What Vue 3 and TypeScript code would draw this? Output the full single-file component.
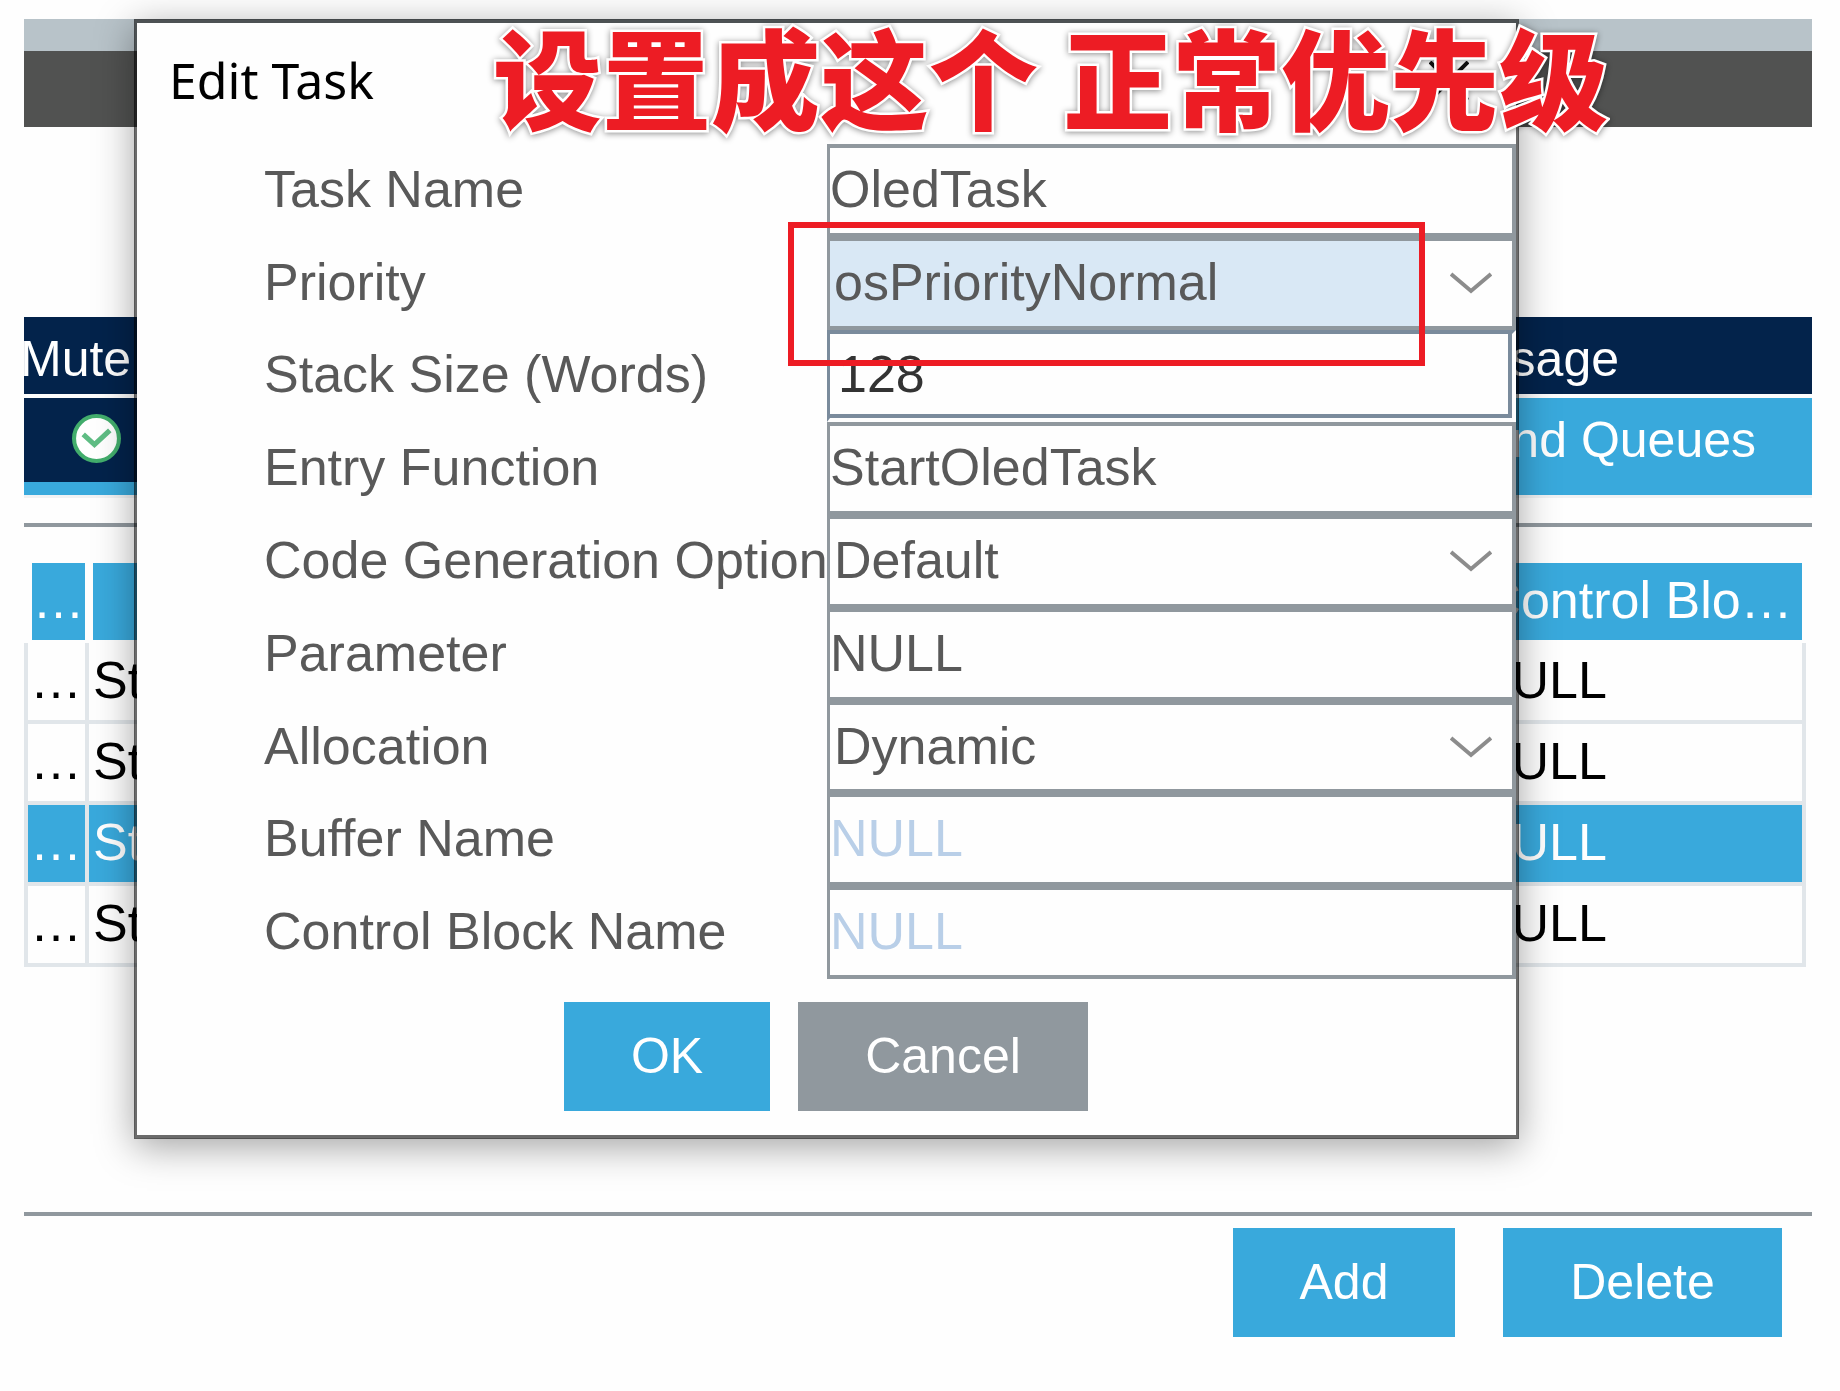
<script setup lang="ts">
import { ref } from 'vue'

type Kind = 'text' | 'select' | 'number' | 'disabled'

interface Field {
  id: string
  label: string
  value: string
  kind: Kind
  active?: boolean
}

interface TaskRow {
  id: number
  name: string
  block: string
  selected: boolean
}

const fields = ref<Field[]>([
  { id: 'task-name', label: 'Task Name', value: 'OledTask', kind: 'text' },
  { id: 'priority', label: 'Priority', value: 'osPriorityNormal', kind: 'select', active: true },
  { id: 'stack-size', label: 'Stack Size (Words)', value: '128', kind: 'number' },
  { id: 'entry-function', label: 'Entry Function', value: 'StartOledTask', kind: 'text' },
  { id: 'code-generation', label: 'Code Generation Option', value: 'Default', kind: 'select' },
  { id: 'parameter', label: 'Parameter', value: 'NULL', kind: 'text' },
  { id: 'allocation', label: 'Allocation', value: 'Dynamic', kind: 'select' },
  { id: 'buffer-name', label: 'Buffer Name', value: 'NULL', kind: 'disabled' },
  { id: 'block-name', label: 'Control Block Name', value: 'NULL', kind: 'disabled' },
])

const rows: TaskRow[] = [
  { id: 1, name: 'St', block: 'NULL', selected: false },
  { id: 2, name: 'St', block: 'NULL', selected: false },
  { id: 3, name: 'St', block: 'NULL', selected: true },
  { id: 4, name: 'St', block: 'NULL', selected: false },
]
</script>

<template>
  <div class="page">
    <main class="panel">
      <div class="strip"></div>
      <div class="toolbar"></div>

      <nav class="tabs">
        <div class="tab-row tab-row-top">
          <a href="#mutexes" class="tab tab-mutex">Mute</a>
          <a href="#usage" class="tab tab-usage">Usage</a>
        </div>
        <div class="tab-row tab-row-bottom">
          <a href="#tasks" class="tab tab-current" aria-label="Tasks">
            <svg class="check" viewBox="0 0 48 48" aria-hidden="true">
              <circle cx="24" cy="24" r="22" fill="#fff" stroke="#42ad6c" stroke-width="4" />
              <path d="M11 20 L22 30 L37 16" fill="none" stroke="#5fbd84" stroke-width="5" />
            </svg>
          </a>
          <a href="#queues" class="tab tab-queues">and Queues</a>
        </div>
      </nav>

      <section class="list">
        <table>
          <colgroup>
            <col class="col-first" />
            <col />
            <col class="col-last" />
          </colgroup>
          <thead>
            <tr>
              <th>…</th>
              <th></th>
              <th>Control Blo…</th>
            </tr>
          </thead>
          <tbody>
            <tr v-for="row in rows" :key="row.id" :class="{ selected: row.selected }">
              <td>…</td>
              <td>{{ row.name }}</td>
              <td>{{ row.block }}</td>
            </tr>
          </tbody>
        </table>
      </section>

      <footer class="actions">
        <button type="button" class="btn btn-add">Add</button>
        <button type="button" class="btn btn-delete">Delete</button>
      </footer>
    </main>

    <div class="dialog" role="dialog" aria-labelledby="dialog-title">
      <header class="dialog-head">
        <h1 id="dialog-title">Edit Task</h1>
        <button type="button" class="close" aria-label="Close">
          <svg viewBox="0 0 40 40" aria-hidden="true">
            <path d="M1 1 L39 39 M39 1 L1 39" fill="none" stroke="#111" stroke-width="4" />
          </svg>
        </button>
      </header>

      <form @submit.prevent>
        <div class="fields">
          <div v-for="field in fields" :key="field.id" class="field">
            <label :for="field.id">{{ field.label }}</label>
            <div v-if="field.kind === 'select'" class="control" :class="{ active: field.active }">
              <select :id="field.id" v-model="field.value">
                <option>{{ field.value }}</option>
              </select>
              <svg class="chevron" viewBox="0 0 42 22" aria-hidden="true">
                <path d="M1 2 L21 19 L41 2" fill="none" stroke="#8c8c8c" stroke-width="4" />
              </svg>
            </div>
            <div v-else class="control" :class="field.kind">
              <input :id="field.id" v-model="field.value" type="text" :disabled="field.kind === 'disabled'" />
            </div>
          </div>
        </div>
        <div class="dialog-actions">
          <button type="submit" class="btn btn-ok">OK</button>
          <button type="button" class="btn btn-cancel">Cancel</button>
        </div>
      </form>
      <div class="marker"></div>
    </div>

    <p class="note" lang="zh-CN">设置成这个 正常优先级</p>
  </div>
</template>

<style>
body {
  margin: 0;
  background: #fefefe;
}
</style>

<style scoped>
.page {
  position: relative;
  box-sizing: border-box;
  min-height: 100vh;
  padding: 19px 28px 0 24px;
  overflow: hidden;
  font-family: "Liberation Sans", Arial, sans-serif;
  font-size: 52px;
}

.strip {
  height: 32px;
  background: #b8c3c9;
}

.toolbar {
  height: 76px;
  background: #515251;
}

.tabs {
  margin-top: 190px;
  font-size: 50px;
  border-bottom: 3px solid #f0f2f4;
}

.tab-row {
  display: flex;
  justify-content: space-between;
  overflow: hidden;
}

.tab-row-top {
  height: 77px;
  background: #03234b;
  border-bottom: 4px solid #fdfdfd;
}

.tab-row-bottom {
  height: 97px;
  background: #39a9dc;
}

.tab {
  color: #fff;
  text-decoration: none;
  white-space: nowrap;
}

.tab-mutex {
  margin-left: -4px;
  line-height: 85px;
}

.tab-usage {
  padding-right: 193px;
  line-height: 85px;
}

.tab-current {
  display: flex;
  align-items: center;
  width: 400px;
  height: 84px;
  padding-left: 48px;
  background: #03234b;
}

.check {
  width: 49px;
  height: 49px;
  padding-bottom: 4px;
}

.tab-queues {
  padding-right: 56px;
  line-height: 85px;
}

.list {
  box-sizing: border-box;
  min-height: 693px;
  margin-top: 25px;
  padding: 36px 6px 0 0;
  border-top: 4px solid #90989e;
  border-bottom: 4px solid #90989e;
}

table {
  width: 100%;
  table-layout: fixed;
  border-collapse: separate;
  border-spacing: 0;
}

.col-first {
  width: 61px;
}

.col-last {
  width: 340px;
}

th,
td {
  height: 74px;
  padding: 0 0 3px;
  overflow: hidden;
  line-height: 74px;
  font-weight: 400;
  white-space: nowrap;
  background-clip: padding-box;
}

th {
  color: #fff;
  background-color: #39a9dc;
  border-left: 8px solid transparent;
  border-bottom: 3px solid transparent;
}

th:last-child {
  border-right: 4px solid transparent;
}

td {
  padding-left: 4px;
  color: #000;
  text-align: left;
  border-left: 4px solid #e1e6ea;
  border-bottom: 4px solid #e1e6ea;
}

td:first-child {
  padding-left: 2px;
}

td:last-child {
  border-right: 4px solid #e1e6ea;
}

.selected td {
  color: #fff;
  background-color: #39a9dc;
}

.actions {
  display: flex;
  justify-content: flex-end;
  gap: 48px;
  padding: 12px 30px 52px 0;
}

.btn {
  height: 109px;
  padding: 0 0 1px;
  border: 0;
  color: #fff;
  background: #39a9dc;
  font-family: inherit;
  font-size: 50px;
}

.btn-add {
  width: 222px;
}

.btn-delete {
  width: 279px;
}

.btn-ok {
  width: 206px;
}

.btn-cancel {
  width: 290px;
  background: #90989e;
}

.dialog {
  position: absolute;
  top: 19px;
  left: 134px;
  right: 321px;
  border: 4px solid rgba(0, 0, 0, 0.58);
  border-width: 4px 3px 4px 3px;
  background: #fefefe;
  background-clip: padding-box;
  box-shadow: 0 8px 36px rgba(0, 0, 0, 0.36);
}

.dialog-head {
  display: flex;
  justify-content: space-between;
  height: 121px;
  padding: 0 47px 0 32px;
}

h1 {
  margin: 0;
  color: #000;
  font-family: "Noto Sans", "Open Sans", sans-serif;
  font-size: 50px;
  font-weight: 400;
  line-height: 114px;
}

.close {
  width: 40px;
  height: 40px;
  margin-top: 38px;
  padding: 0;
  border: 0;
  background: none;
}

.close svg {
  display: block;
}

.fields {
  display: grid;
  grid-auto-rows: 1fr;
  height: 835px;
}

.field {
  display: grid;
  grid-template-columns: 563px 1fr;
  align-items: center;
  padding-left: 127px;
}

label {
  padding-bottom: 3px;
  color: #595959;
  white-space: nowrap;
}

.control {
  position: relative;
  display: flex;
  align-items: center;
  box-sizing: border-box;
  height: 100%;
  border: 4px solid #90989e;
  border-left-width: 3px;
  background: #fefefe;
}

.control.number {
  border-color: #7a8b9c #fefefe #fefefe #7a8b9c;
  box-shadow: inset -4px -4px #7a8b9c;
}

input,
select {
  box-sizing: border-box;
  width: 100%;
  height: 100%;
  padding: 0 0 3px;
  border: 0;
  border-radius: 0;
  outline: 0;
  appearance: none;
  color: #595959;
  background: transparent;
  font-family: inherit;
  font-size: 52px;
}

select {
  padding-left: 4px;
}

.active select {
  background: linear-gradient(to right, #d9e8f5 calc(100% - 91px), transparent 0);
}

.number input {
  padding-left: 8px;
  color: #333;
}

input:disabled {
  color: #b9cfe8;
}

.chevron {
  position: absolute;
  right: 20px;
  width: 42px;
  height: 22px;
  pointer-events: none;
}

.dialog-actions {
  display: flex;
  gap: 28px;
  padding: 23px 0 24px 427px;
}

.marker {
  position: absolute;
  top: 199px;
  left: 651px;
  right: 91px;
  box-sizing: border-box;
  height: 144px;
  border: 6px solid #ed1c24;
  pointer-events: none;
}

.note {
  position: absolute;
  top: 20px;
  left: 493px;
  margin: 0;
  color: #ed1c24;
  font-family: "Noto Sans CJK SC", sans-serif;
  font-size: 109px;
  font-weight: 900;
  line-height: 110px;
  white-space: nowrap;
  -webkit-text-stroke: 5px #fff;
  paint-order: stroke fill;
  filter: drop-shadow(0 1px 3px rgba(0, 0, 0, 0.45));
  pointer-events: none;
}
</style>
